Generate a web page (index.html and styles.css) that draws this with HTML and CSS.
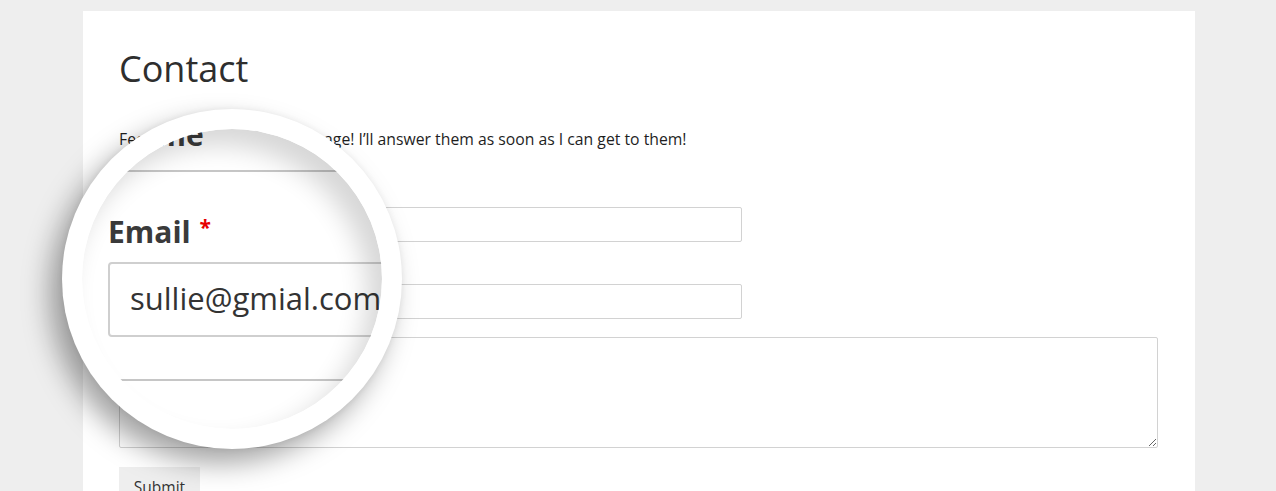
FILE: index.html
```html
<!DOCTYPE html>
<html lang="en">
<head>
<meta charset="utf-8">
<title>Contact</title>
<link rel="stylesheet" href="styles.css">
</head>
<body>
<main class="card">
  <h1 class="title">Contact</h1>
  <p class="intro">Feel free to send me a message! I’ll answer them as soon as I can get to them!</p>
  <form class="form">
    <div class="field">
      <label class="label">Name <span class="req">*</span></label>
      <input class="input" type="text">
    </div>
    <div class="field">
      <label class="label">Email <span class="req">*</span></label>
      <input class="input" type="email">
    </div>
    <div class="field">
      <textarea class="textarea"></textarea>
    </div>
    <div class="actions">
      <button class="submit" type="button">Submit</button>
    </div>
  </form>
</main>

<div class="lens">
  <div class="lens-view">
    <div class="lens-content">
      <div class="lens-label lens-label-name">Name</div>
      <div class="lens-line"></div>
      <div class="lens-label lens-label-email">Email <span class="lens-req">*</span></div>
      <div class="lens-input">sullie@gmial.com</div>
      <div class="lens-textarea"></div>
    </div>
  </div>
</div>
</body>
</html>
```

FILE: styles.css
```css
html, body {
  margin: 0;
  padding: 0;
}
body {
  background: #eeeeee;
  font-family: "Open Sans", "Noto Sans", sans-serif;
  color: #222;
  height: 491px;
  overflow: hidden;
  position: relative;
}
.card {
  margin: 11px 0 0 83px;
  width: 1112px;
  box-sizing: border-box;
  background: #fff;
  padding: 36px 37px 40px 36px;
}
.title {
  margin: 0 0 36px 0;
  font-size: 36px;
  line-height: 44px;
  font-weight: 400;
  color: #2e2e2e;
}
.intro {
  margin: 0 0 34px 0;
  font-size: 15.75px;
  line-height: 24px;
  color: #1e1e1e;
}
.form {
  display: flex;
  flex-direction: column;
}
.field {
  display: flex;
  flex-direction: column;
  margin-bottom: 20px;
}
.field:nth-child(2) {
  margin-bottom: 18px;
}
.field:nth-child(3) {
  margin-bottom: 19px;
}
.label {
  font-size: 14px;
  line-height: 20px;
  font-weight: 700;
  color: #444;
  margin-bottom: 2px;
}
.req {
  color: #e00;
}
.input {
  width: 623px;
  height: 35px;
  box-sizing: border-box;
  border: 1px solid #d2d2d2;
  border-radius: 2px;
  background: #fff;
  margin: 0;
  font-family: inherit;
}
.textarea {
  width: 1039px;
  height: 111px;
  box-sizing: border-box;
  border: 1px solid #d2d2d2;
  border-radius: 2px;
  background: #fff;
  margin: 0;
  font-family: inherit;
}
.actions {
  display: flex;
}
.submit {
  background: #eeeeee;
  border: none;
  border-radius: 0;
  padding: 8px 14px;
  font-family: inherit;
  font-size: 15.5px;
  line-height: 24px;
  color: #333;
  width: 81px;
}

/* magnifier */
.lens {
  position: absolute;
  left: 62px;
  top: 109px;
  padding: 20px;
  border-radius: 50%;
  background: #fff;
  box-shadow: -12px 14px 28px rgba(0, 0, 0, 0.36), 0 0 6px rgba(0, 0, 0, 0.06);
}
.lens-view {
  width: 300px;
  height: 300px;
  border-radius: 50%;
  overflow: hidden;
  position: relative;
  background: #fff;
}
.lens-view::after {
  content: "";
  position: absolute;
  inset: 0;
  border-radius: 50%;
  box-shadow: inset -14px 16px 26px rgba(0, 0, 0, 0.16);
  pointer-events: none;
}
.lens-content {
  display: flex;
  flex-direction: column;
  padding-left: 26px;
  width: 1000px;
}
.lens-label {
  font-size: 30px;
  line-height: 36px;
  height: 36px;
  font-weight: 700;
  color: #3a3a3a;
}
.lens-label-name {
  margin-top: -12px;
  padding-left: 6px;
}
.lens-label-email {
  margin-top: 42px;
}
.lens-req {
  color: #e60000;
  font-size: 21px;
  line-height: 0;
  vertical-align: 8px;
  margin-left: 1px;
}
.lens-line {
  height: 17px;
  border-bottom: 2px solid #c6c6c6;
  margin-left: -40px;
}
.lens-input {
  margin-top: 12px;
  height: 75px;
  box-sizing: border-box;
  border: 2px solid #cfcfcf;
  border-radius: 4px;
  padding-left: 20px;
  font-size: 31px;
  line-height: 69px;
  color: #333;
}
.lens-textarea {
  margin-top: 42px;
  margin-left: -40px;
  height: 100px;
  border-top: 2px solid #c6c6c6;
}
```
